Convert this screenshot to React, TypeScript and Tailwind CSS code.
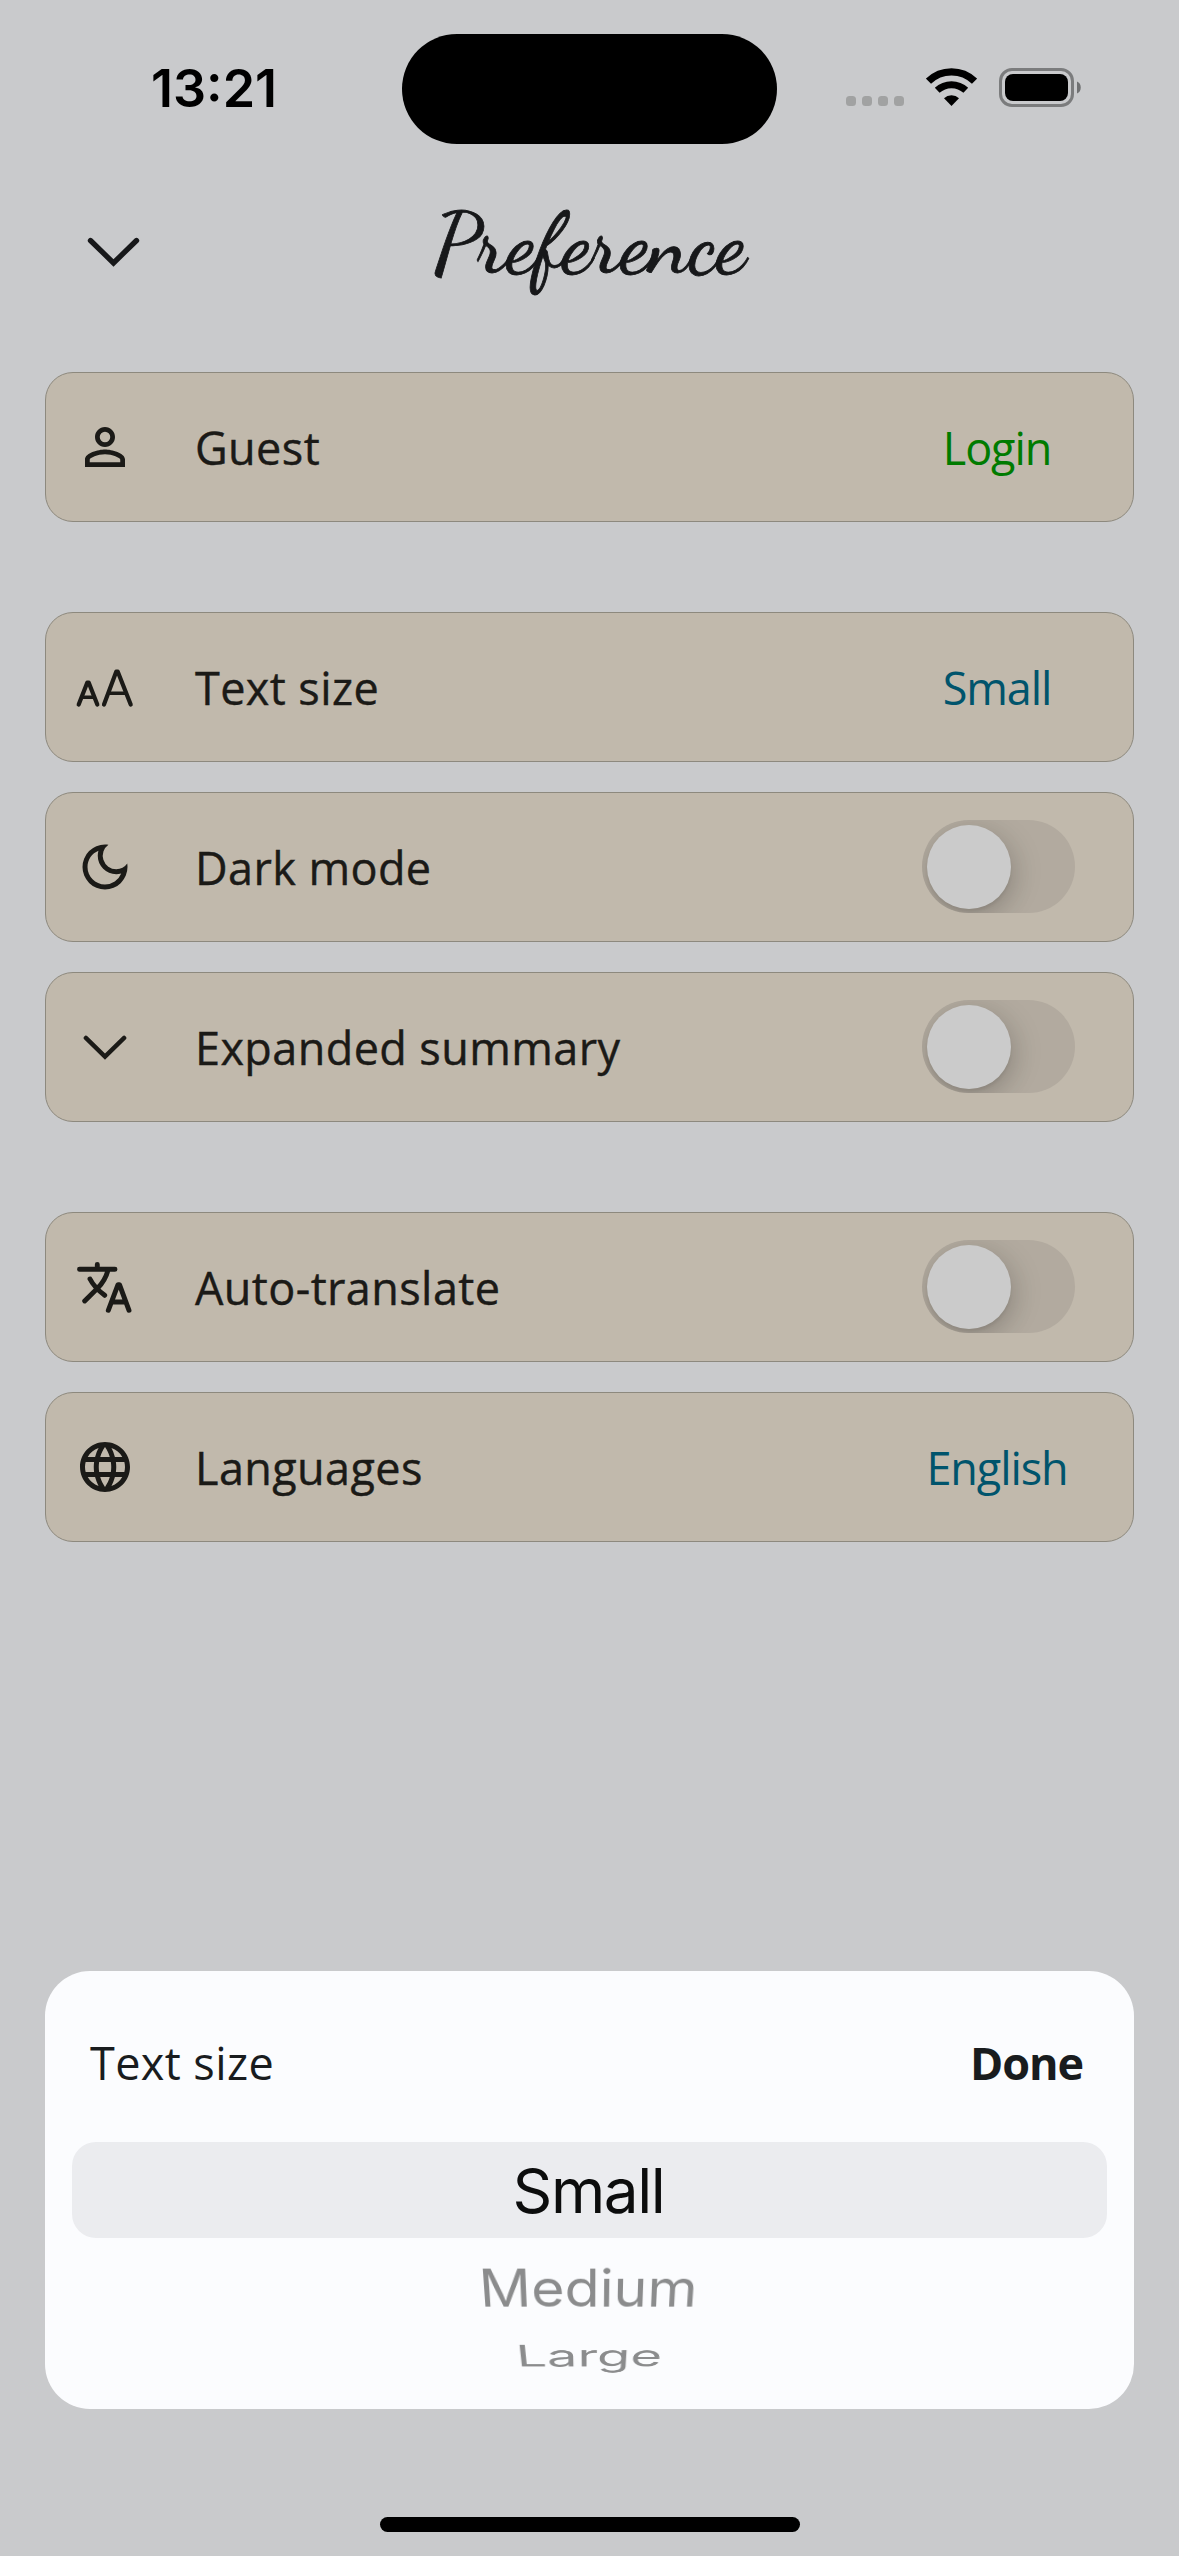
import type { ReactNode } from "react";
import { MdOutlinePersonOutline, MdOutlineDarkMode, MdLanguage } from "react-icons/md";

function Chevron({ width, height }: { width: number; height: number }) {
  return (
    <svg width={width} height={height} viewBox="0 0 46 26" fill="none" stroke="currentColor" strokeWidth="4.6" strokeLinecap="round" strokeLinejoin="miter">
      <path d="M3 3 23 22.5 43 3" />
    </svg>
  );
}

function TextSizeIcon() {
  return (
    <svg width="60" height="60" viewBox="0 0 60 60" fill="none" stroke="currentColor" strokeWidth="4.2" strokeLinecap="round" strokeLinejoin="round">
      <path d="M3.7 47.5 12.3 25.5H13.7L22.3 47.5" />
      <path d="M29 47.5 41.3 14.5H42.7L55.7 47.5" />
      <path d="M7 40.3H19M34 36.3H51" strokeWidth="3.4" strokeLinecap="butt" />
    </svg>
  );
}

function TranslateIcon() {
  return (
    <svg width="60" height="60" viewBox="0 0 60 60" fill="none" stroke="currentColor" strokeWidth="4.9" strokeLinecap="round" strokeLinejoin="round">
      <path d="M4.5 12.3H40M22.3 7.5V12.3M33.3 12.3C31 21 27.5 26.5 22.3 31.5L9.7 44M15 22C18 28 24 34 29.7 38.3" />
      <path d="M33.3 53.3 43 27.7H44.5L54 53.3M38 45H50" />
    </svg>
  );
}

function Toggle() {
  return (
    <div className="mr-[14px] mb-px flex h-[93px] w-[153px] items-center overflow-hidden rounded-full bg-[#b2aa9f] pl-[4.5px]">
      <div className="size-[84px] rounded-full bg-[#cbcbcb] shadow-[0_9px_24px_rgba(0,0,0,0.15),0_3px_3px_rgba(0,0,0,0.06),8px_4px_30px_rgba(0,0,0,0.08)]" />
    </div>
  );
}

function Value({ children, color }: { children: ReactNode; color: string }) {
  return <div className={`mr-[2px] w-[180px] pt-[2px] text-center font-normal tracking-[-1.1px] ${color}`}>{children}</div>;
}

function Row({ icon, label, children }: { icon: ReactNode; label: string; children: ReactNode }) {
  return (
    <div className="flex h-[150px] items-center rounded-[28px] border border-[#8d897e] bg-[#c1b9ac] pr-[44px] pl-[29px] text-[45px] text-[#1b1a17]">
      <div className="flex size-[60px] items-center justify-center">{icon}</div>
      <div className="ml-[60px] flex-1 pt-[2px] tracking-[0.4px] [-webkit-text-stroke:0.4px_currentColor]">{label}</div>
      {children}
    </div>
  );
}

function StatusBar() {
  return (
    <div className="flex h-[144px] items-start">
      <div className="w-[402px] pt-[57px] pl-[151px] font-['Inter'] text-[52px] leading-[64px] font-semibold">13:21</div>
      <div className="mt-[34px] h-[110px] w-[375px] rounded-full bg-black" />
      <div className="ml-[69px] flex h-[144px] items-start">
        <div className="mt-[96px] flex gap-[6px]">
          {[0, 1, 2, 3].map((i) => (
            <div key={i} className="size-[10px] rounded-[3.5px] bg-[#a1a2a2]" />
          ))}
        </div>
        <svg className="mt-[68px] ml-[22px]" width="51" height="38" viewBox="0 0 51 38" fill="none" stroke="black">
          <path d="M2.5 13.2A33 33 0 0 1 48.5 13.2" strokeWidth="7.3" />
          <path d="M11.2 22.3A21 21 0 0 1 39.8 22.3" strokeWidth="7" />
          <path d="M25.5 38 18 30.2A11 11 0 0 1 33 30.2Z" fill="black" stroke="none" />
        </svg>
        <svg className="mt-[68px] ml-[22px]" width="83" height="39" viewBox="0 0 83 39">
          <rect x="1.5" y="1.5" width="72" height="36" rx="11.5" fill="none" stroke="#7b7c7d" strokeWidth="3" />
          <rect x="6" y="6" width="63" height="27" rx="8" />
          <path d="M78 13.5C83 15 83 24 78 25.5Z" fill="#707172" />
        </svg>
      </div>
    </div>
  );
}

export default function App() {
  return (
    <div className="relative flex h-[2556px] w-[1179px] flex-col overflow-hidden bg-[#c9cacc] font-['Open_Sans',sans-serif] text-black">
      <StatusBar />
      <header className="grid h-[228px] grid-cols-[402px_1fr_402px] pt-[36px] text-[#17181a]">
        <div className="pt-[57px] pl-[86.5px]">
          <Chevron width={53} height={30} />
        </div>
        <h1 className="text-center font-['Dancing_Script',cursive] text-[85px] leading-[128px] font-medium whitespace-nowrap [-webkit-text-stroke:0.8px_currentColor]">Preference</h1>
      </header>

      <main className="flex flex-col gap-[90px] px-[45px]">
        <section>
          <Row icon={<MdOutlinePersonOutline size={60} />} label="Guest">
            <Value color="text-[#007b00]">Login</Value>
          </Row>
        </section>
        <section className="flex flex-col gap-[30px]">
          <Row icon={<TextSizeIcon />} label="Text size">
            <Value color="text-[#00546c]">Small</Value>
          </Row>
          <Row icon={<MdOutlineDarkMode size={60} />} label="Dark mode">
            <Toggle />
          </Row>
          <Row icon={<Chevron width={44} height={25} />} label="Expanded summary">
            <Toggle />
          </Row>
        </section>
        <section className="flex flex-col gap-[30px]">
          <Row icon={<TranslateIcon />} label="Auto-translate">
            <Toggle />
          </Row>
          <Row icon={<MdLanguage size={60} />} label="Languages">
            <Value color="text-[#00546c]">English</Value>
          </Row>
        </section>
      </main>

      <div className="mx-[45px] mt-[429px] h-[438px] rounded-[45px] bg-[#fbfcfe] px-[27px]">
        <div className="flex h-[171px] items-center justify-between pt-[12px] pr-[24px] pl-[18px] text-[45px] text-[#191c1e]">
          <span className="tracking-[0.4px]">Text size</span>
          <button className="font-bold tracking-[-1.1px]">Done</button>
        </div>
        <div className="h-[96px] rounded-[24px] bg-[#ebecef] pr-[2px] text-center font-['Inter'] text-[62px] leading-[97px] tracking-[-1.4px] text-[#0c0d0d]">Small</div>
        <div className="flex flex-col items-center font-['Inter'] text-[#8b8c8d]">
          <div className="h-[97px] [transform:perspective(700px)_rotateX(-25deg)] pr-[2px] text-[57.5px] leading-[101px]">Medium</div>
          <div className="h-[41px] [transform:perspective(950px)_rotateX(-57deg)] text-[54.5px] leading-[43px]">Large</div>
        </div>
      </div>

      <div className="mx-auto mt-[108px] h-[15px] w-[420px] rounded-full bg-black" />
    </div>
  );
}
